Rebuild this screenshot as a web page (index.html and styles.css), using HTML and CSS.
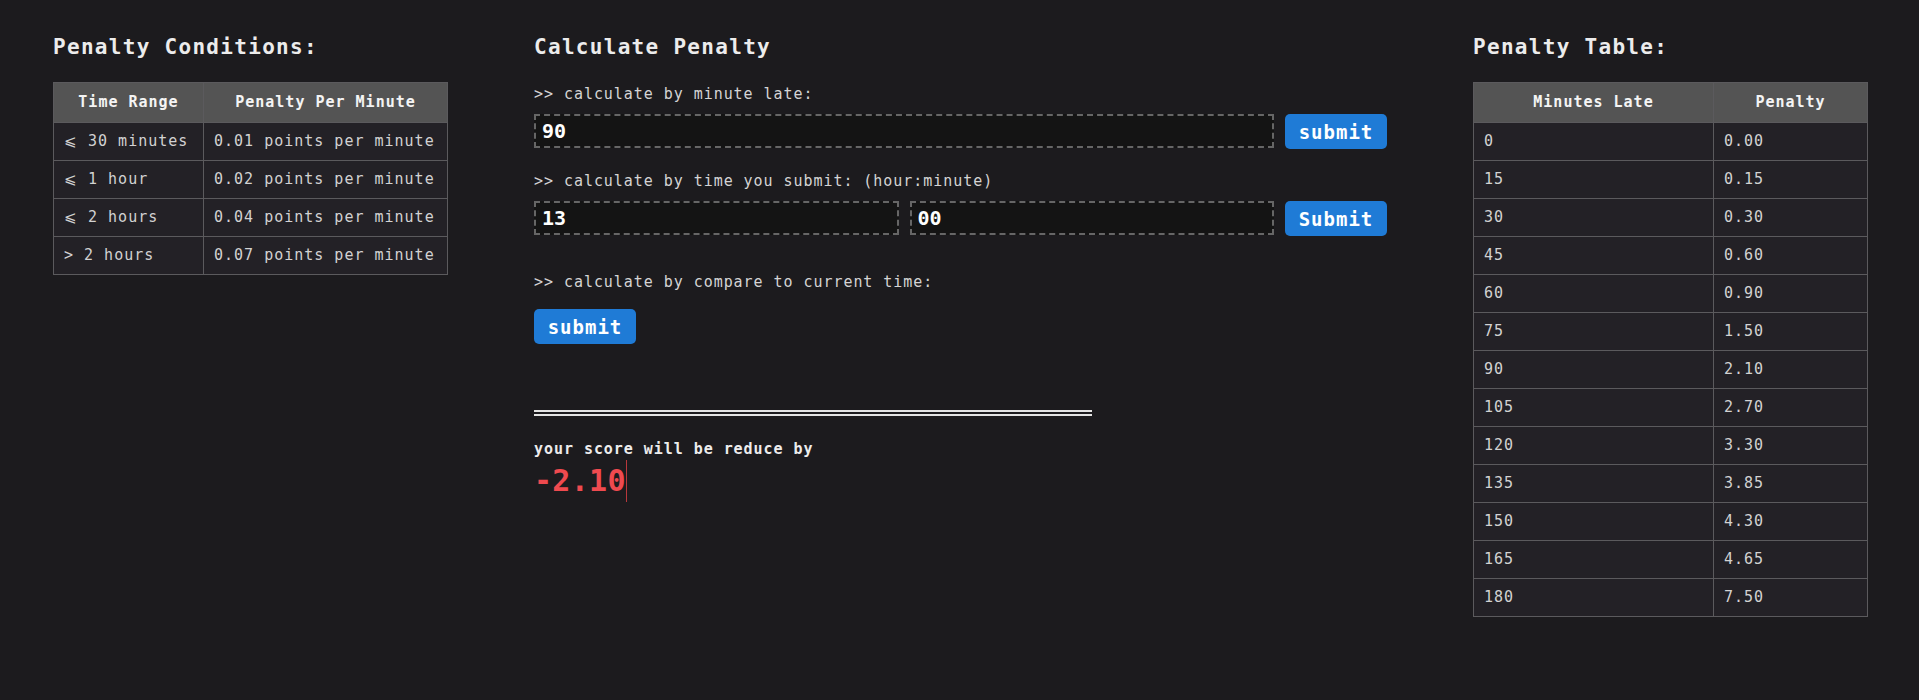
FILE: index.html
```html
<!DOCTYPE html>
<html lang="en">
<head>
<meta charset="utf-8">
<title>Penalty Calculator</title>
<link rel="stylesheet" href="styles.css">
</head>
<body>
<main class="layout">
  <section class="col">
    <h2 class="title">Penalty Conditions:</h2>
    <table class="tbl tbl-cond">
      <colgroup><col class="c-range"><col class="c-rate"></colgroup>
      <thead><tr><th>Time Range</th><th>Penalty Per Minute</th></tr></thead>
      <tbody>
        <tr><td>⩽ 30 minutes</td><td>0.01 points per minute</td></tr>
        <tr><td>⩽ 1 hour</td><td>0.02 points per minute</td></tr>
        <tr><td>⩽ 2 hours</td><td>0.04 points per minute</td></tr>
        <tr><td>&gt; 2 hours</td><td>0.07 points per minute</td></tr>
      </tbody>
    </table>
  </section>

  <section class="col calc">
    <h2 class="title">Calculate Penalty</h2>
    <p class="label l1">&gt;&gt; calculate by minute late:</p>
    <div class="row">
      <input class="field" type="text" value="90">
      <button class="btn">submit</button>
    </div>
    <p class="label l2">&gt;&gt; calculate by time you submit: (hour:minute)</p>
    <div class="row">
      <input class="field" type="text" value="13">
      <input class="field" type="text" value="00">
      <button class="btn">Submit</button>
    </div>
    <p class="label l3">&gt;&gt; calculate by compare to current time:</p>
    <div class="row-single">
      <button class="btn">submit</button>
    </div>
    <hr class="divider">
    <p class="result-label">your score will be reduce by</p>
    <p class="result"><span class="result-val">-2.10</span></p>
  </section>

  <section class="col">
    <h2 class="title">Penalty Table:</h2>
    <table class="tbl tbl-pen">
      <colgroup><col class="c-min"><col class="c-pen"></colgroup>
      <thead><tr><th>Minutes Late</th><th>Penalty</th></tr></thead>
      <tbody>
        <tr><td>0</td><td>0.00</td></tr>
        <tr><td>15</td><td>0.15</td></tr>
        <tr><td>30</td><td>0.30</td></tr>
        <tr><td>45</td><td>0.60</td></tr>
        <tr><td>60</td><td>0.90</td></tr>
        <tr><td>75</td><td>1.50</td></tr>
        <tr><td>90</td><td>2.10</td></tr>
        <tr><td>105</td><td>2.70</td></tr>
        <tr><td>120</td><td>3.30</td></tr>
        <tr><td>135</td><td>3.85</td></tr>
        <tr><td>150</td><td>4.30</td></tr>
        <tr><td>165</td><td>4.65</td></tr>
        <tr><td>180</td><td>7.50</td></tr>
      </tbody>
    </table>
  </section>
</main>
</body>
</html>
```

FILE: styles.css
```css
* { box-sizing: border-box; }

html, body {
  margin: 0;
  background: #1c1b1e;
  color: #e6e6e6;
  font-family: "DejaVu Sans Mono", "Liberation Mono", monospace;
}

body { height: 700px; overflow: hidden; }

.layout {
  display: grid;
  grid-template-columns: 394px 1fr 394px;
  column-gap: 87px;
  padding: 33px 52px 0 53px;
}

.col { min-width: 0; }

.title {
  margin: 0;
  font-size: 21px;
  line-height: 28px;
  font-weight: bold;
  letter-spacing: 1.3px;
  color: #ececec;
}

/* tables */
.tbl {
  margin-top: 21px;
  width: 394px;
  border-collapse: collapse;
  table-layout: fixed;
  font-size: 15px;
  letter-spacing: 1px;
}
.tbl th, .tbl td {
  border: 1px solid #5b5a5d;
  padding: 0 10px;
  white-space: nowrap;
}
.tbl th {
  background: #545454;
  color: #f4f4f4;
  font-weight: bold;
  text-align: center;
  line-height: 39px;
}
.tbl td {
  background: #232126;
  color: #d2d2d2;
  line-height: 37px;
}
.c-range { width: 150px; }
.c-rate { width: 244px; }
.c-min { width: 240px; }
.c-pen { width: 154px; }

/* calculator */
.label {
  margin: 0;
  font-size: 15px;
  line-height: 22px;
  letter-spacing: 0.95px;
  color: #d4d4d4;
}
.l1 { margin-top: 22px; }
.l2 { margin-top: 21px; }
.l3 { margin-top: 35px; }

.row {
  display: flex;
  gap: 11px;
  margin-top: 9px;
  height: 35px;
  width: 853px;
}
.row-single { margin-top: 16px; display: flex; }

.field {
  flex: 1 1 0;
  min-width: 0;
  height: 34px;
  background: #141414;
  border: 2px dashed #666;
  color: #ffffff;
  font-family: inherit;
  font-size: 20px;
  font-weight: bold;
  padding: 0 6px;
  outline: none;
}

.btn {
  flex: 0 0 auto;
  width: 102px;
  height: 35px;
  background: #1f7bd6;
  color: #fff;
  border: none;
  border-radius: 5px;
  font-family: inherit;
  font-size: 19px;
  font-weight: bold;
  letter-spacing: 1px;
  padding: 0;
  cursor: pointer;
}

.divider {
  margin: 66px 0 0;
  width: 558px;
  height: 0;
  border: none;
  border-top: 6px double #e4e4e4;
}

.result-label {
  margin: 24px 0 0;
  font-size: 15px;
  line-height: 18px;
  font-weight: bold;
  letter-spacing: 0.95px;
  color: #ececec;
}

.result {
  margin: 2px 0 0;
  font-size: 30px;
  line-height: 42px;
  font-weight: bold;
  letter-spacing: 0.3px;
  color: #ef4a4f;
}
.result-val {
  display: inline-block;
  border-right: 1.5px solid #b8383c;
  height: 42px;
}
```
